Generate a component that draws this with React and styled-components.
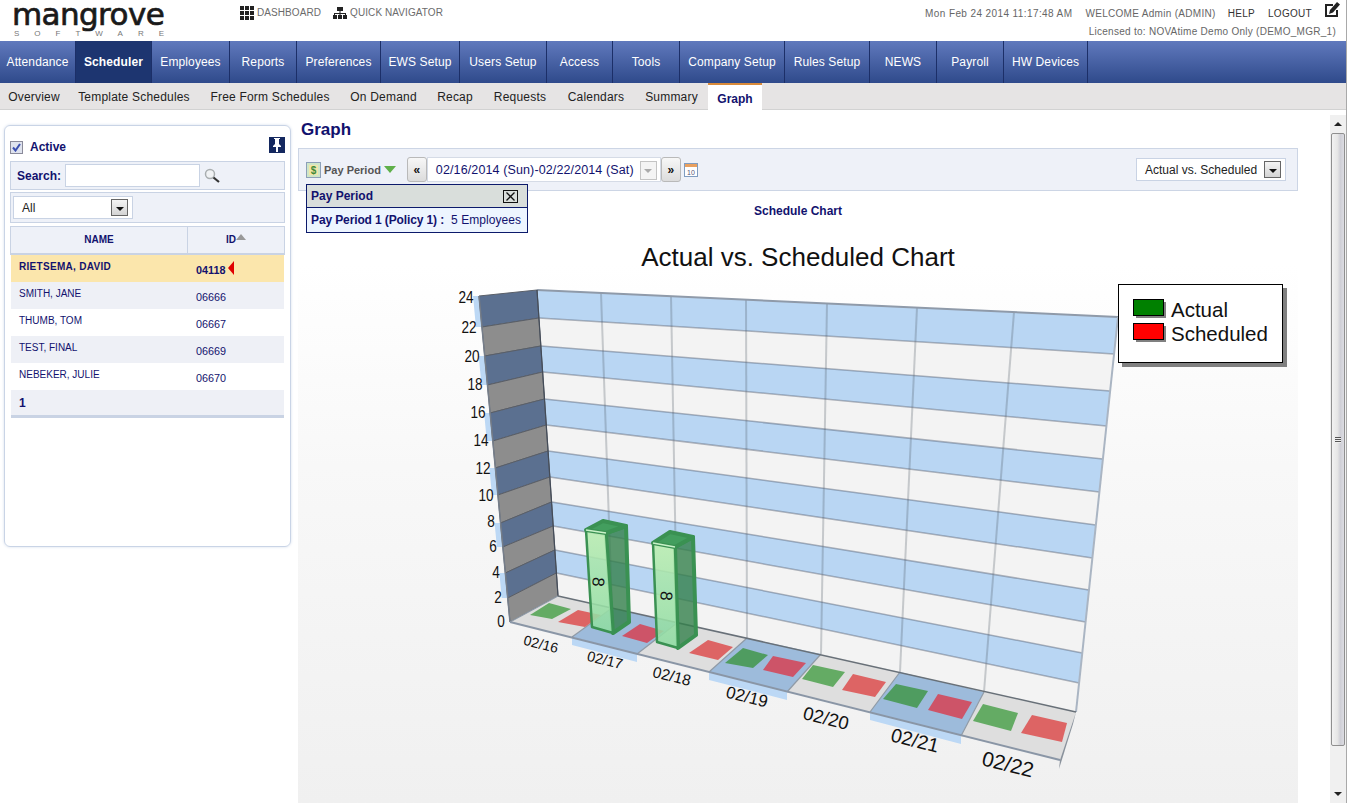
import React from 'react';
import styled, { createGlobalStyle } from 'styled-components';

const Navy = '#12126e';

const GlobalStyle = createGlobalStyle`
    html, body {
        margin: 0;
        height: 100%;
        overflow: hidden;
        background: #fff;
        font-family: "Liberation Sans", Arial, sans-serif;
    }
`;

const Page = styled.div`
    width: 1347px;
    height: 803px;
    box-sizing: border-box;
    border-right: 1px solid #a9a9a9;
    display: flex;
    flex-direction: column;
    overflow: hidden;
`;

const Header = styled.div`
    height: 41px;
    display: flex;
`;

const Logo = styled.div`
    width: 240px;
    padding-left: 12px;
    box-sizing: border-box;
    color: #1a1a1a;
`;

const LogoWord = styled.div`
    font-family: "DejaVu Sans", sans-serif;
    font-size: 31px;
    line-height: 37px;
    height: 37px;
    margin: -4px 0 -4px;
    letter-spacing: -0.6px;
    -webkit-text-stroke: 0.7px #1a1a1a;
`;

const LogoSub = styled.div`
    font-size: 8px;
    letter-spacing: 15px;
    padding-left: 2px;
    color: #777;
    line-height: 9px;
    white-space: nowrap;
`;

const QuickLinks = styled.div`
    display: flex;
    gap: 12px;
    padding-top: 6px;
    height: 14px;
`;

const QuickLink = styled.span`
    display: flex;
    align-items: center;
    gap: 3px;
    font-size: 10px;
    letter-spacing: 0.08px;
    color: #6b6b6b;
    line-height: 14px;
`;

const UserBox = styled.div`
    margin-left: auto;
    padding-right: 6px;
    display: flex;
    flex-direction: column;
    align-items: flex-end;
`;

const UserRow = styled.div`
    display: flex;
    align-items: center;
    height: 26px;
    font-size: 10px;
    color: #666;
    letter-spacing: 0.3px;
    gap: 13px;
`;

const DateStamp = styled.span`
    letter-spacing: 0.4px;
`;

const Welcome = styled.span`
    margin-right: -1px;
`;

const UserLink = styled.span`
    color: #333;
`;

const EditIcon = styled.svg`
    margin: -7px 0 0 -1px;
`;

const License = styled.div`
    font-size: 10px;
    color: #666;
    letter-spacing: 0.27px;
    line-height: 12px;
    margin-right: 4px;
`;

const MainNav = styled.div`
    height: 42px;
    display: flex;
    background: linear-gradient(#6079bd, #2f4a8b);
`;

const NavTab = styled.div`
    width: ${p => p.$w}px;
    box-sizing: border-box;
    border-right: 1px solid #1c2f68;
    display: flex;
    align-items: center;
    justify-content: center;
    font-size: 12px;
    letter-spacing: 0.12px;
    white-space: nowrap;
    font-weight: ${p => (p.$active ? 'bold' : 'normal')};
    color: #fff;
    background: ${p => (p.$active ? '#1d3570' : 'transparent')};
`;

const SubNav = styled.div`
    height: 27px;
    display: flex;
    background: #e6e4e4;
    border-bottom: 1px solid #d2d2d2;
    box-sizing: border-box;
`;

const SubTab = styled.div`
    width: ${p => p.$w}px;
    padding-top: 2px;
    display: flex;
    align-items: center;
    justify-content: center;
    font-size: 12px;
    letter-spacing: 0.2px;
    white-space: nowrap;
    color: #222;
`;

const ActiveSubTab = styled(SubTab)`
    font-weight: bold;
    background: #fff;
    border-top: 2px solid #d98a3a;
    height: 27px;
    box-sizing: border-box;
    letter-spacing: 0;
    color: #12126e;
`;

const Main = styled.div`
    flex: 1;
    display: flex;
    min-height: 0;
`;

const Sidebar = styled.div`
    width: 287px;
    height: 422px;
    margin: 15px 7px 0 4px;
    padding: 11px 5px 0;
    box-sizing: border-box;
    border: 1px solid #c9d4e6;
    border-radius: 6px;
    box-shadow: 0 0 3px #d5deec;
    flex-shrink: 0;
`;

const ActiveRow = styled.div`
    display: flex;
    align-items: center;
    height: 20px;
    margin-bottom: 4px;
    font-size: 12px;
    font-weight: bold;
    color: ${Navy};
`;

const Checkbox = styled.span`
    width: 11px;
    height: 11px;
    border: 1px solid #8a8a9a;
    background: #dfe3ee;
    margin-right: 7px;
    display: flex;
    align-items: center;
    justify-content: center;
`;

const PinButton = styled.span`
    margin-left: auto;
    width: 16px;
    height: 16px;
    background: #14285f;
    display: flex;
    align-items: center;
    justify-content: center;
    margin-top: -5px;
`;

const BoxRow = styled.div`
    border: 1px solid #c9d3e4;
    background: #eef1f8;
    display: flex;
    align-items: center;
    box-sizing: border-box;
    height: ${p => p.$h}px;
    margin-bottom: 2px;
    padding: 0 2px;
`;

const SearchLabel = styled.span`
    font-size: 12px;
    font-weight: bold;
    color: ${Navy};
    margin: 0 4px 0 4px;
`;

const SearchInput = styled.div`
    width: 133px;
    height: 21px;
    background: #fff;
    border: 1px solid #c9d3e4;
`;

const MagnifierIcon = styled.svg`
    margin-left: 4px;
`;

const SelectBox = styled.div`
    width: ${p => p.$w}px;
    height: 23px;
    box-sizing: border-box;
    background: #fff;
    border: 1px solid #c9d3e4;
    display: flex;
    align-items: center;
    font-size: 12px;
    color: #222;
    padding: 0 4px 0 ${p => p.$pad}px;
    justify-content: space-between;
`;

const SelectArrow = styled.span`
    width: 15px;
    height: 15px;
    border: 1px solid #666;
    background: linear-gradient(#f4f4f4, #d4d4d4);
    display: flex;
    align-items: center;
    justify-content: center;
    &::after {
        content: '';
        margin-top: 2px;
        border: 4px solid transparent;
        border-top-color: #111;
        border-bottom: 0;
    }
`;

const TableHead = styled.div`
    display: grid;
    grid-template-columns: 176px 1fr;
    height: 29px;
    margin-top: 3px;
    box-sizing: border-box;
    border: 1px solid #c9d3e4;
    border-bottom-width: 2px;
    background: #eef1f8;
    font-size: 10px;
    font-weight: bold;
    color: ${Navy};
`;

const HeadCell = styled.div`
    display: flex;
    align-items: center;
    justify-content: center;
    padding-bottom: 1px;
    & + & {
        border-left: 1px solid #c9d3e4;
    }
`;

const SortArrow = styled.span`
    border: 5px solid transparent;
    border-bottom: 6px solid #999;
    border-top: 0;
    margin: -5px 0 0 0;
`;

const Row = styled.div`
    display: grid;
    grid-template-columns: 177px 1fr;
    height: 27px;
    margin: 0 1px;
    padding-left: 8px;
    font-size: 10px;
    color: ${Navy};
    font-weight: ${p => (p.$selected ? 'bold' : 'normal')};
    background: ${p => (p.$selected ? '#fbe6ac' : p.$odd ? '#eef0f6' : '#fff')};
`;

const NameCell = styled.div`
    padding-top: 6px;
    line-height: 12px;
    letter-spacing: ${p => (p.$selected ? '0.3px' : '0')};
`;

const IdCell = styled.div`
    padding-top: 8px;
    line-height: 14px;
    font-size: 10.8px;
    display: flex;
    align-items: flex-start;
`;

const RowMarker = styled.span`
    border: 7px solid transparent;
    border-right: 6px solid #e00000;
    border-left: 0;
    margin: -2px 0 0 3px;
`;

const Pager = styled.div`
    height: 28px;
    margin: 0 1px;
    padding: 6px 0 0 8px;
    box-sizing: border-box;
    background: #eef0f6;
    border-bottom: 3px solid #c9d3e4;
    font-size: 12px;
    font-weight: bold;
    color: ${Navy};
`;

const Content = styled.div`
    width: 1000px;
    display: flex;
    flex-direction: column;
    flex-shrink: 0;
    position: relative;
`;

const Title = styled.div`
    height: 38px;
    padding: 10px 0 0 3px;
    box-sizing: border-box;
    font-size: 17px;
    font-weight: bold;
    color: ${Navy};
    line-height: 19px;
`;

const Toolbar = styled.div`
    height: 43px;
    flex-shrink: 0;
    box-sizing: border-box;
    background: #eef1f8;
    border: 1px solid #ccd5e5;
    display: flex;
    align-items: center;
    padding: 0 11px 0 7px;
`;

const PeriodLabel = styled.span`
    font-size: 11px;
    font-weight: bold;
    color: #555;
    margin: 0 3px;
`;

const GreenArrow = styled.span`
    border: 6px solid transparent;
    border-top: 7px solid #5fb04a;
    border-bottom: 0;
    margin-right: 11px;
`;

const StepButton = styled.span`
    width: 18px;
    height: 23px;
    border: 1px solid #b9b9b9;
    border-radius: 3px;
    background: linear-gradient(#f7f7f7, #dcdcdc);
    display: flex;
    align-items: center;
    justify-content: center;
    font-size: 12px;
    font-weight: bold;
    color: #111;
`;

const DateBox = styled.div`
    width: 234px;
    height: 25px;
    box-sizing: border-box;
    background: #fff;
    border: 1px solid #d5dbe6;
    display: flex;
    align-items: center;
    justify-content: space-between;
    padding: 1px 3px 0 8px;
    font-size: 12.5px;
    letter-spacing: 0.12px;
    white-space: nowrap;
    color: ${Navy};
`;

const DisabledArrow = styled.span`
    width: 15px;
    height: 17px;
    border: 1px solid #c4c4c4;
    background: #f4f4f4;
    display: flex;
    align-items: center;
    justify-content: center;
    &::after {
        content: '';
        border: 4px solid transparent;
        border-top-color: #aaa;
        border-bottom: 0;
        margin-top: 2px;
    }
`;

const CalendarIcon = styled.svg`
    margin-left: 3px;
`;

const ChartSelect = styled.div`
    margin-left: auto;
`;

const PeriodPopup = styled.div`
    position: absolute;
    left: 8px;
    top: 74px;
    width: 222px;
    box-sizing: border-box;
    border: 1px solid #0c1a6b;
    background: #edf5ff;
    font-size: 12px;
    color: ${Navy};
    z-index: 2;
`;

const PopupHead = styled.div`
    height: 22px;
    background: #d9dedb;
    border-bottom: 1px solid #0c1a6b;
    display: flex;
    align-items: center;
    justify-content: space-between;
    padding: 0 9px 0 4px;
    font-weight: bold;
`;

const CloseBox = styled.span`
    width: 13px;
    height: 11px;
    border: 1px solid #111;
    display: flex;
    align-items: center;
    justify-content: center;
`;

const PopupBody = styled.div`
    height: 24px;
    display: flex;
    align-items: center;
    padding-left: 4px;
    letter-spacing: 0.05px;
    white-space: nowrap;
`;

const PopupStrong = styled.b`
    margin-right: 7px;
    letter-spacing: -0.12px;
`;

const ChartPanel = styled.div`
    flex: 1;
    min-height: 0;
    background: linear-gradient(#fff 12%, #f8f8f8 45%, #f0f0f0 100%);
`;

const ChartCaption = styled.div`
    height: 40px;
    padding-top: 13px;
    box-sizing: border-box;
    text-align: center;
    font-size: 12px;
    line-height: 14px;
    font-weight: bold;
    color: ${Navy};
`;

const ChartSvg = styled.svg`
    display: block;
`;

const ChartText = styled.text`
    font-family: "Liberation Sans", Arial, sans-serif;
    fill: #111;
    font-size: ${p => p.$size}px;
`;

const Scrollbar = styled.div`
    width: 16px;
    margin: 5px 0 0 auto;
    background: #f0f0f0;
    display: flex;
    flex-direction: column;
    align-items: center;
`;

const ScrollArrow = styled.span`
    height: 18px;
    flex-shrink: 0;
    display: flex;
    align-items: center;
    justify-content: center;
    &::after {
        content: '';
        border: 4px solid transparent;
        ${p => (p.$up ? 'border-bottom: 4px solid #222; border-top: 0;' : 'border-top: 4px solid #222; border-bottom: 0;')}
    }
`;

const ScrollThumb = styled.div`
    width: 14px;
    height: 613px;
    box-sizing: border-box;
    border: 1px solid #8f8f8f;
    border-radius: 2px;
    background: linear-gradient(90deg, #f2f2f2, #e6e6e6 45%, #cfcfd6 70%, #dcdce2);
    display: flex;
    align-items: center;
    justify-content: center;
    &::after {
        content: '';
        width: 6px;
        height: 6px;
        background: repeating-linear-gradient(#555 0 1px, #eee 1px 2px);
    }
`;

const ScrollGap = styled.div`
    flex: 1;
`;

const navItems = [
    ['Attendance', 76], ['Scheduler', 76], ['Employees', 78], ['Reports', 67], ['Preferences', 84],
    ['EWS Setup', 79], ['Users Setup', 87], ['Access', 66], ['Tools', 67], ['Company Setup', 105],
    ['Rules Setup', 85], ['NEWS', 67], ['Payroll', 67], ['HW Devices', 84],
];
const subItems = [
    ['Overview', 68], ['Template Schedules', 132], ['Free Form Schedules', 140], ['On Demand', 87],
    ['Recap', 56], ['Requests', 74], ['Calendars', 78], ['Summary', 73],
];
const employees = [
    ['RIETSEMA, DAVID', '04118'],
    ['SMITH, JANE', '06666'],
    ['THUMB, TOM', '06667'],
    ['TEST, FINAL', '06669'],
    ['NEBEKER, JULIE', '06670'],
];

// chart geometry, in page coordinates
const wallBackY = [290, 318, 346, 372, 399, 425, 451, 477, 502, 526, 550, 573, 596];
const wallRightY = [317, 354, 391, 426, 459, 492, 525, 558, 590, 622, 653, 683, 712];
const wallFrontY = [296, 327, 356, 385, 413, 441, 468, 495, 523, 547, 573, 598, 622];
const gridTopX = [537, 601, 671, 746, 827, 917, 1014, 1118];
const floorBack = [[558, 596], [612, 608], [677, 623], [747, 638], [821, 654], [900, 672], [984, 692], [1076, 712]];
const floorFront = [[510, 622], [572, 637], [637, 654], [709, 672], [787, 692], [870, 712], [961, 736], [1060, 760]];
const axisLabels = [
    ['24', 466, 297], ['22', 469, 327], ['20', 472, 356], ['18', 475, 384], ['16', 478, 412],
    ['14', 481, 440], ['12', 483, 468], ['10', 486, 495], ['8', 491, 521], ['6', 493, 546],
    ['4', 496, 572], ['2', 498, 597], ['0', 501, 621],
];
const dayLabels = [
    ['02/16', 541, 644, 14], ['02/17', 605, 660, 14.5], ['02/18', 672, 676, 15.5], ['02/19', 747, 697, 17],
    ['02/20', 826, 718, 18.5], ['02/21', 915, 740, 19.5], ['02/22', 1008, 764, 21],
];
const floorMarks = [
    ['g', 0, '530,615 549,603 571,609 552,619'],
    ['r', 0, '558,622 578,610 601,615 585,627'],
    ['r', 1, '622,636 640,624 664,631 647,643'],
    ['r', 2, '689,653 708,640 733,647 718,660'],
    ['g', 3, '725,663 743,648 768,655 753,668'],
    ['r', 3, '763,670 773,656 806,663 793,677'],
    ['g', 4, '802,679 813,665 845,672 833,687'],
    ['r', 4, '842,690 853,674 886,682 875,697'],
    ['g', 5, '883,699 896,684 928,691 917,708'],
    ['r', 5, '928,710 938,694 972,702 962,719'],
    ['g', 6, '973,721 983,704 1018,713 1011,731'],
    ['r', 6, '1021,733 1032,715 1067,723 1062,742'],
];
const bars = [
    {
        front: '586,530 606,533 613,633 592,627',
        side: '606,533 626,526 629,622 613,633',
        top: '586,530 603,521 626,526 606,533',
        edge: [586, 530, 606, 533],
        label: [598, 582],
    },
    {
        front: '653,543 675,547 678,648 657,642',
        side: '675,547 693,537 696,635 678,648',
        top: '653,543 670,532 693,537 675,547',
        edge: [653, 543, 675, 547],
        label: [666, 596],
    },
];

const wallX = (y, y0, y1, x0, x1) => x0 + ((y - y0) / (y1 - y0)) * (x1 - x0);
const backX = y => wallX(y, 290, 596, 537, 558);
const rightX = y => wallX(y, 317, 712, 1118, 1076);
const frontX = y => wallX(y, 296, 622, 479, 510);

const markColor = (kind, day) => {
    const onBlue = day % 2 === 1;
    if (kind === 'g') return onBlue ? '#4f9c60' : '#64ab64';
    return onBlue ? '#cd5468' : '#dd6464';
};

const Chart = () => (
    <ChartSvg width="1000" height="572" viewBox="298 231 1000 572">
        <defs>
            <linearGradient id="barFront" x1="0" y1="0" x2="0" y2="1">
                <stop offset="0" stopColor="#b7ecb0" />
                <stop offset="1" stopColor="#8edba2" />
            </linearGradient>
        </defs>
        <ChartText x="798" y="266" textAnchor="middle" $size={26}>Actual vs. Scheduled Chart</ChartText>

        {/* back wall */}
        {wallBackY.slice(0, 12).map((y, i) => (
            <polygon
                key={y}
                points={`${backX(y)},${y} ${rightX(wallRightY[i])},${wallRightY[i]} ${rightX(wallRightY[i + 1])},${wallRightY[i + 1]} ${backX(wallBackY[i + 1])},${wallBackY[i + 1]}`}
                fill={i % 2 === 0 ? '#b9d6f3' : '#f3f3f3'}
            />
        ))}
        {gridTopX.slice(1, 7).map((x, i) => (
            <line key={x} x1={x} y1={290 + ((x - 537) * 27) / 581} x2={floorBack[i + 1][0]} y2={floorBack[i + 1][1]} stroke="rgba(80,90,100,0.28)" strokeWidth="2" />
        ))}
        {wallBackY.slice(1, 12).map((y, i) => (
            <line key={y} x1={backX(y)} y1={y} x2={rightX(wallRightY[i + 1])} y2={wallRightY[i + 1]} stroke="rgba(80,90,110,0.45)" strokeWidth="1.5" />
        ))}
        <line x1="537" y1="290" x2="1118" y2="317" stroke="#8f9aa9" strokeWidth="2" />
        <line x1="1118" y1="317" x2="1076" y2="712" stroke="#aab5c3" strokeWidth="2" />

        {/* left wall */}
        {wallFrontY.slice(0, 12).map((y, i) => {
            const next = wallFrontY[i + 1];
            return (
                <g key={y}>
                    {i % 2 === 0 && (
                        <polygon points={`${frontX(y) - 6},${y} ${frontX(y)},${y} ${frontX(next)},${next} ${frontX(next) - 6},${next}`} fill="#bcd8f5" />
                    )}
                    <polygon
                        points={`${frontX(y)},${y} ${backX(wallBackY[i])},${wallBackY[i]} ${backX(wallBackY[i + 1])},${wallBackY[i + 1]} ${frontX(next)},${next}`}
                        fill={i % 2 === 0 ? '#5b7090' : '#8d8d8d'}
                        stroke="#5a5f68"
                        strokeWidth="1"
                    />
                </g>
            );
        })}
        <line x1="537" y1="290" x2="558" y2="596" stroke="#444c58" strokeWidth="1.2" />
        <line x1="479" y1="296" x2="510" y2="622" stroke="#767e8a" strokeWidth="1.5" />

        {/* floor */}
        {floorFront.slice(0, 7).map((p, i) => {
            const q = floorFront[i + 1];
            return (
                <g key={p[0]}>
                    {i % 2 === 1 && (
                        <polygon points={`${p[0]},${p[1]} ${q[0]},${q[1]} ${q[0]},${q[1] + 8} ${p[0]},${p[1] + 8}`} fill="#bcd8f5" />
                    )}
                    <polygon
                        points={`${p[0]},${p[1]} ${q[0]},${q[1]} ${floorBack[i + 1][0]},${floorBack[i + 1][1]} ${floorBack[i][0]},${floorBack[i][1]}`}
                        fill={i % 2 === 1 ? '#9dbbdb' : '#dedede'}
                    />
                    <line x1={p[0]} y1={p[1]} x2={floorBack[i][0]} y2={floorBack[i][1]} stroke="#8f9aa6" strokeWidth="1.2" />
                </g>
            );
        })}
        <line x1="510" y1="622" x2="1060" y2="760" stroke="#8a96a6" strokeWidth="2" />
        <line x1="558" y1="596" x2="1076" y2="712" stroke="#687078" strokeWidth="1.5" />
        <polygon points="1076,712 1060,760 1059,769 1073,724" fill="#8a929c" />

        {floorMarks.map(([kind, day, points]) => (
            <polygon key={points} points={points} fill={markColor(kind, day)} />
        ))}

        {/* bars */}
        {bars.map(bar => (
            <g key={bar.front} strokeLinejoin="round">
                <polygon points={bar.side} fill="#33804b" fillOpacity="0.8" stroke="#3a9152" strokeWidth="4" />
                <polygon points={bar.front} fill="url(#barFront)" fillOpacity="0.88" stroke="#3a9152" strokeWidth="2.5" />
                <polygon points={bar.top} fill="#439e5e" stroke="#3a9152" strokeWidth="4" />
                <line x1={bar.edge[0]} y1={bar.edge[1]} x2={bar.edge[2]} y2={bar.edge[3]} stroke="#c8f2c8" strokeWidth="1.5" />
                <ChartText x={bar.label[0]} y={bar.label[1]} textAnchor="middle" dominantBaseline="central" transform={`rotate(95 ${bar.label[0]} ${bar.label[1]})`} $size={17}>8</ChartText>
            </g>
        ))}

        {axisLabels.map(([text, x, y]) => (
            <ChartText key={text} x={x} y={y} textAnchor="middle" dominantBaseline="central" transform={`translate(${x} 0) scale(0.8 1) translate(${-x} 0)`} $size={17}>{text}</ChartText>
        ))}
        {dayLabels.map(([text, x, y, size]) => (
            <ChartText key={text} x={x} y={y} textAnchor="middle" dominantBaseline="central" transform={`rotate(14 ${x} ${y})`} $size={size}>{text}</ChartText>
        ))}

        {/* legend */}
        <rect x="1122" y="288" width="165" height="79" fill="#808080" />
        <rect x="1118.5" y="284.5" width="164" height="78" fill="#fff" stroke="#000" />
        <rect x="1136" y="302" width="30" height="16" fill="#808080" />
        <rect x="1133.5" y="299.5" width="30" height="16" fill="#008000" stroke="#000" />
        <rect x="1136" y="326" width="30" height="16" fill="#808080" />
        <rect x="1133.5" y="323.5" width="30" height="16" fill="#ff0000" stroke="#000" />
        <ChartText x="1171" y="317" $size={20.5}>Actual</ChartText>
        <ChartText x="1171" y="341" $size={20.5}>Scheduled</ChartText>
    </ChartSvg>
);

const App = () => (
    <Page>
        <GlobalStyle />
        <Header>
            <Logo>
                <LogoWord>mangrove</LogoWord>
                <LogoSub>SOFTWARE</LogoSub>
            </Logo>
            <QuickLinks>
                <QuickLink>
                    <svg width="14" height="14" viewBox="0 0 14 14">
                        <path fill="#222" d="M0 0h4v4H0zM5 0h4v4H5zM10 0h4v4h-4zM0 5h4v4H0zM5 5h4v4H5zM10 5h4v4h-4zM0 10h4v4H0zM5 10h4v4H5zM10 10h4v4h-4z" />
                    </svg>
                    DASHBOARD
                </QuickLink>
                <QuickLink>
                    <svg width="14" height="12" viewBox="0 0 14 12">
                        <path fill="#222" d="M4 0h6v4H4zM6.500 4h1v2h-1zM1 6h12v1H1zM1 7h1v1H1zM12 7h1v1h-1zM0 8h4v4H0zM10 8h4v4h-4zM6.500 7h1v1h-1zM5 8h4v4H5z" />
                    </svg>
                    QUICK NAVIGATOR
                </QuickLink>
            </QuickLinks>
            <UserBox>
                <UserRow>
                    <DateStamp>Mon Feb 24 2014 11:17:48 AM</DateStamp>
                    <Welcome>WELCOME Admin (ADMIN)</Welcome>
                    <UserLink>HELP</UserLink>
                    <UserLink>LOGOUT</UserLink>
                    <EditIcon width="16" height="16" viewBox="0 0 16 16">
                        <path fill="none" stroke="#222" strokeWidth="2" d="M9 3H2v11h11V8" />
                        <path fill="#222" d="M6 8l7-8 3 2.500-7 8-4 1.500z" />
                    </EditIcon>
                </UserRow>
                <License>Licensed to: NOVAtime Demo Only (DEMO_MGR_1)</License>
            </UserBox>
        </Header>
        <MainNav>
            {navItems.map(([item, w]) => (
                <NavTab key={item} $w={w} $active={item === 'Scheduler'}>{item}</NavTab>
            ))}
        </MainNav>
        <SubNav>
            {subItems.map(([item, w]) => <SubTab key={item} $w={w}>{item}</SubTab>)}
            <ActiveSubTab $w={54}>Graph</ActiveSubTab>
        </SubNav>
        <Main>
            <Sidebar>
                <ActiveRow>
                    <Checkbox>
                        <svg width="9" height="9" viewBox="0 0 9 9">
                            <path fill="none" stroke="#3b4fb0" strokeWidth="2" d="M1 4.500l2.500 3L8 1" />
                        </svg>
                    </Checkbox>
                    Active
                    <PinButton>
                        <svg width="10" height="14" viewBox="0 0 10 14">
                            <path fill="#fff" d="M2 0h6v1H7v5l2 2v1H6v5H4V9H1V8l2-2V1H2z" />
                        </svg>
                    </PinButton>
                </ActiveRow>
                <BoxRow $h={29}>
                    <SearchLabel>Search:</SearchLabel>
                    <SearchInput />
                    <MagnifierIcon width="16" height="16" viewBox="0 0 16 16">
                        <circle cx="6" cy="6" r="4.500" fill="#f0f2f4" stroke="#a9aeb0" strokeWidth="1.500" />
                        <path stroke="#333" strokeWidth="2.200" d="M9.500 9.500L15 14" />
                    </MagnifierIcon>
                </BoxRow>
                <BoxRow $h={31}>
                    <SelectBox $w={120} $pad={8}>All<SelectArrow /></SelectBox>
                </BoxRow>
                <TableHead>
                    <HeadCell>NAME</HeadCell>
                    <HeadCell>ID<SortArrow /></HeadCell>
                </TableHead>
                {employees.map(([name, id], i) => (
                    <Row key={id} $selected={i === 0} $odd={i % 2 === 1}>
                        <NameCell $selected={i === 0}>{name}</NameCell>
                        <IdCell>{id}{i === 0 && <RowMarker />}</IdCell>
                    </Row>
                ))}
                <Pager>1</Pager>
            </Sidebar>
            <Content>
                <Title>Graph</Title>
                <Toolbar>
                    <svg width="15" height="16" viewBox="0 0 15 16">
                        <rect x="0.500" y="0.500" width="14" height="15" fill="#cfe6c8" stroke="#8ca0b8" />
                        <rect x="3" y="3" width="9" height="10" fill="#f2e6a8" />
                        <text x="7.500" y="12" textAnchor="middle" fontSize="10" fontWeight="bold" fontFamily="Liberation Sans" fill="#3f8a3a">$</text>
                    </svg>
                    <PeriodLabel>Pay Period</PeriodLabel>
                    <GreenArrow />
                    <StepButton>«</StepButton>
                    <DateBox>
                        02/16/2014 (Sun)-02/22/2014 (Sat)
                        <DisabledArrow />
                    </DateBox>
                    <StepButton>»</StepButton>
                    <CalendarIcon width="14" height="14" viewBox="0 0 14 14">
                        <rect x="0.500" y="0.500" width="13" height="13" fill="#fff" stroke="#7f9cc0" />
                        <rect x="1" y="1" width="12" height="3" fill="#e8a060" />
                        <text x="7" y="11.500" textAnchor="middle" fontSize="7" fontFamily="Liberation Sans" fill="#557">10</text>
                    </CalendarIcon>
                    <ChartSelect>
                        <SelectBox $w={150} $pad={8}>Actual vs. Scheduled<SelectArrow /></SelectBox>
                    </ChartSelect>
                </Toolbar>
                <PeriodPopup>
                    <PopupHead>
                        Pay Period
                        <CloseBox>
                            <svg width="9" height="9" viewBox="0 0 9 9">
                                <path stroke="#111" strokeWidth="1.300" d="M0.500 0.500l8 8M8.500 0.500l-8 8" />
                            </svg>
                        </CloseBox>
                    </PopupHead>
                    <PopupBody>
                        <PopupStrong>Pay Period 1 (Policy 1) :</PopupStrong>
                        5 Employees
                    </PopupBody>
                </PeriodPopup>
                <ChartPanel>
                    <ChartCaption>Schedule Chart</ChartCaption>
                    <Chart />
                </ChartPanel>
            </Content>
            <Scrollbar>
                <ScrollArrow $up />
                <ScrollThumb />
                <ScrollGap />
                <ScrollArrow />
            </Scrollbar>
        </Main>
    </Page>
);

export default App;
